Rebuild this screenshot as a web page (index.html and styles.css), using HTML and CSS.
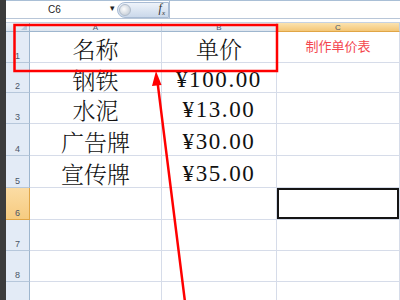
FILE: index.html
```html
<!DOCTYPE html>
<html lang="zh-CN">
<head>
  <meta charset="UTF-8">
  <title>制作单价表</title>
  <link rel="stylesheet" href="styles.css">
</head>
<body>
  <div class="app">
    <div class="edge"></div>
    <div class="main">
      <div class="ribbon"></div>
      <div class="formula-bar">
        <div class="name-box">C6<span class="drop">&#9662;</span></div>
        <div class="pill"><span class="knob"></span><span class="fx">f<sub>x</sub></span></div>
        <div class="formula-input"></div>
      </div>
      <div class="sheet">
        <div class="corner"></div>
        <div class="col-head">A</div>
        <div class="col-head">B</div>
        <div class="col-head active">C</div>

        <div class="row-head">1</div>
        <div class="cell name">名称</div>
        <div class="cell name">单价</div>
        <div class="cell note">制作单价表</div>

        <div class="row-head">2</div>
        <div class="cell name">钢铁</div>
        <div class="cell price">¥100.00</div>
        <div class="cell"></div>

        <div class="row-head">3</div>
        <div class="cell name">水泥</div>
        <div class="cell price">¥13.00</div>
        <div class="cell"></div>

        <div class="row-head">4</div>
        <div class="cell name">广告牌</div>
        <div class="cell price">¥30.00</div>
        <div class="cell"></div>

        <div class="row-head">5</div>
        <div class="cell name">宣传牌</div>
        <div class="cell price">¥35.00</div>
        <div class="cell"></div>

        <div class="row-head active">6</div>
        <div class="cell"></div>
        <div class="cell"></div>
        <div class="cell selected"></div>

        <div class="row-head">7</div>
        <div class="cell"></div>
        <div class="cell"></div>
        <div class="cell"></div>

        <div class="row-head">8</div>
        <div class="cell"></div>
        <div class="cell"></div>
        <div class="cell"></div>

        <div class="row-head"></div>
        <div class="cell"></div>
        <div class="cell"></div>
        <div class="cell"></div>
      </div>
    </div>
  </div>

  <!-- 标注：红框和箭头 -->
  <svg class="marks" width="400" height="300" viewBox="0 0 400 300">
    <rect x="14.5" y="25" width="262.5" height="46" fill="none" stroke="#f00" stroke-width="2.5"/>
    <line x1="185" y1="302" x2="157.5" y2="82" stroke="#f00" stroke-width="2.5"/>
    <polygon points="156,71 161.5,85 152,86" fill="#f00"/>
  </svg>
</body>
</html>
```

FILE: styles.css
```css
body {
  margin: 0;
  width: 400px;
  height: 300px;
  overflow: hidden;
  background: #fff;
  font-family: "Liberation Sans", sans-serif;
  position: relative;
}

.app {
  display: flex;
  height: 300px;
}

.edge {
  width: 6px;
  background: #3c3c3c;
  flex: none;
}

.main {
  flex: 1;
  display: flex;
  flex-direction: column;
}

.ribbon {
  height: 4px;
  background: #dbe6f3;
  border-bottom: 1px solid #a9bfd6;
}

.formula-bar {
  height: 17px;
  display: flex;
  align-items: center;
  background: #fff;
  border-bottom: 1px solid #b8c6d8;
}

.name-box {
  width: 111px;
  box-sizing: border-box;
  padding-right: 14px;
  font-size: 10px;
  color: #222;
  position: relative;
  text-align: center;
}

.drop {
  position: absolute;
  right: 2px;
  top: -1px;
  font-size: 9px;
  color: #222;
}

.pill {
  width: 52px;
  height: 16px;
  border-radius: 8px 0 0 8px;
  background: linear-gradient(#eef3fa, #cad8ea);
  border: 1px solid #a8bbd4;
  display: flex;
  align-items: center;
  justify-content: space-between;
  padding: 0 3px 0 1px;
  box-sizing: border-box;
}

.knob {
  width: 12px;
  height: 12px;
  border-radius: 50%;
  background: radial-gradient(circle at 40% 40%, #fdfdfd, #b9c3cf);
  border: 1px solid #b0bccb;
  box-sizing: border-box;
}

.fx {
  font-family: "Liberation Serif", serif;
  font-style: italic;
  font-size: 12px;
  color: #333;
}

.fx sub {
  font-size: 7px;
}

.formula-input {
  flex: 1;
  height: 17px;
  border-left: 1px solid #a8bbd4;
}

.sheet {
  margin-top: 3px;
  display: grid;
  grid-template-columns: 24px 132px 115px 1fr;
  grid-template-rows: 9px 31px 30px 31px 32px 32px 32px 31px 31px 31px;
  border-top: 1px solid #c5d2e2;
}

.corner {
  background: linear-gradient(#f2f5fa, #dce5f0);
  border-right: 1px solid #9eb6ce;
  border-bottom: 1px solid #9eb6ce;
  position: relative;
}

.corner::after {
  content: "";
  position: absolute;
  right: 2px;
  bottom: 1px;
  border-left: 6px solid transparent;
  border-bottom: 6px solid #b9c9dc;
}

.col-head {
  background: linear-gradient(#f3f6fb, #dde5ef);
  border-right: 1px solid #c0cfe0;
  border-bottom: 1px solid #9eb6ce;
  font-size: 8px;
  line-height: 9px;
  color: #4a5568;
  text-align: center;
}

.col-head.active {
  background: linear-gradient(#fbe3b0, #f4c777);
  border-bottom-color: #e0a546;
}

.row-head {
  background: #e3ebf6;
  border-right: 1px solid #9eb6ce;
  border-bottom: 1px solid #b6c7db;
  font-size: 9px;
  color: #4a5568;
  display: flex;
  align-items: flex-end;
  justify-content: center;
  padding-bottom: 1px;
}

.row-head.active {
  background: linear-gradient(#fbdca4, #f6cb80);
  border-right-color: #e0a546;
  border-bottom-color: #e0a546;
}

.cell {
  border-right: 1px solid #d6dce9;
  border-bottom: 1px solid #d6dce9;
  display: flex;
  align-items: center;
  justify-content: center;
  white-space: nowrap;
}

.name {
  font-family: "Noto Serif CJK SC", "Noto Sans CJK SC", serif;
  font-weight: 300;
  font-size: 23px;
  line-height: 1;
  padding-top: 3px;
  color: #111;
}

.price {
  font-family: "Liberation Serif", serif;
  font-size: 23px;
  line-height: 1;
  padding-top: 3px;
  letter-spacing: 1.6px;
  color: #111;
}

.note {
  font-family: "Noto Sans CJK SC", sans-serif;
  font-size: 13px;
  color: #f4474f;
  padding-bottom: 3px;
}

.selected {
  box-shadow: inset 0 0 0 2px #151515;
}

.marks {
  position: absolute;
  left: 0;
  top: 0;
  pointer-events: none;
}
```
